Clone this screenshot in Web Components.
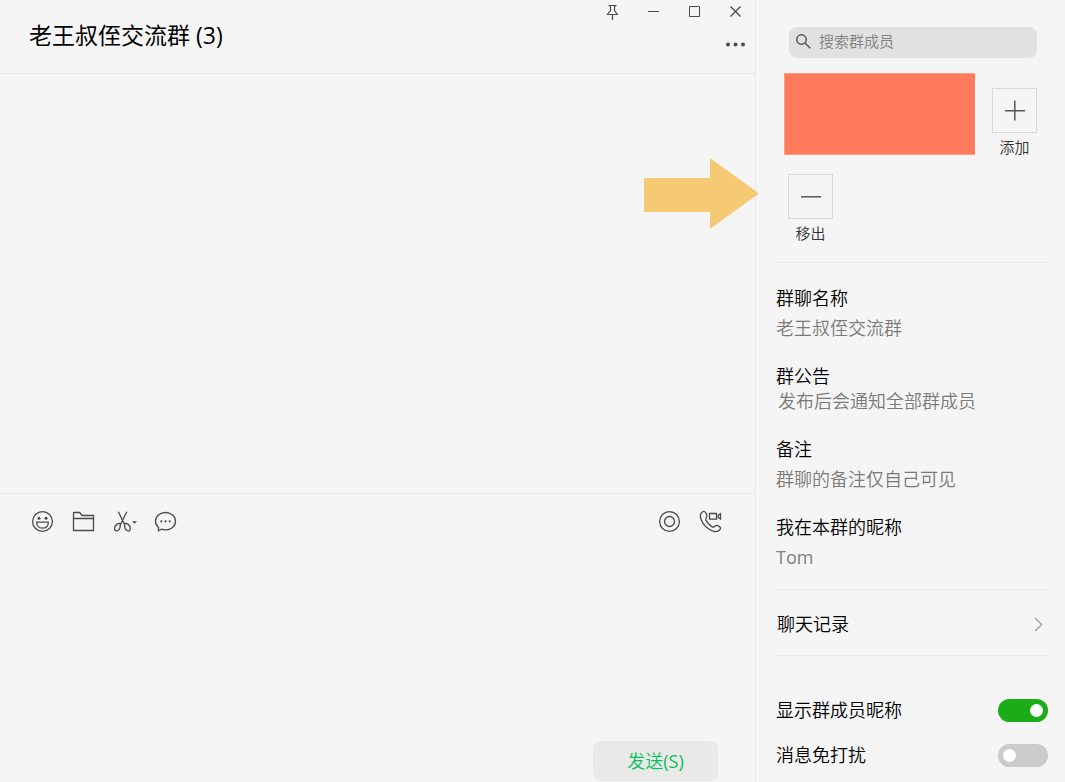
<!DOCTYPE html>
<html lang="zh-CN">
<head>
<meta charset="utf-8">
<meta name="viewport" content="width=device-width, initial-scale=1">
<title>老王叔侄交流群</title>
<style>
  html, body { margin: 0; height: 100%; }
  body {
    background: #f5f5f5;
    color: #000;
    font-family: "Open Sans", "Noto Sans CJK SC", sans-serif;
    font-size: 18px;
    font-weight: 350;
    line-height: 25px;
  }
</style>
</head>
<body>
<chat-app>
  <chat-window slot="chat" heading="老王叔侄交流群 (3)"></chat-window>
  <group-panel slot="panel">
    <search-box placeholder="搜索群成员"></search-box>
    <member-grid></member-grid>
    <info-list>
      <info-field label="群聊名称">老王叔侄交流群</info-field>
      <info-field label="群公告" notice>发布后会通知全部群成员</info-field>
      <info-field label="备注">群聊的备注仅自己可见</info-field>
      <info-field label="我在本群的昵称" latin>Tom</info-field>
    </info-list>
    <link-row>聊天记录</link-row>
    <toggle-list>
      <toggle-row checked>显示群成员昵称</toggle-row>
      <toggle-row>消息免打扰</toggle-row>
    </toggle-list>
  </group-panel>
</chat-app>

<script>
const reset = `
  :host, *, *::before, *::after { box-sizing: border-box; }
  button, input, textarea { font: inherit; color: inherit; margin: 0; padding: 0; border: 0; background: none; }
  svg { display: block; fill: none; stroke: #4a4a4a; }
`;
function define(name, render) {
  customElements.define(name, class extends HTMLElement {
    connectedCallback() {
      if (this.shadowRoot) return;
      this.attachShadow({ mode: "open" }).innerHTML = "<style>" + reset + "</style>" + render(this);
    }
  });
}

define("chat-app", () => `
  <style>
    :host { display: flex; min-height: 100vh; }
    ::slotted([slot=chat]) { flex: 1; min-width: 0; }
    ::slotted([slot=panel]) { flex: none; width: 310px; }
  </style>
  <slot name="chat"></slot><slot name="panel"></slot>`);

define("chat-window", el => `
  <style>
    :host { display: flex; flex-direction: column; }
    main { flex: 1; position: relative; }
    .arrow { position: absolute; z-index: 1; right: -4px; top: 84px; stroke: none; fill: #f6ca74; }
  </style>
  <chat-header>${el.getAttribute("heading")}</chat-header>
  <main>
    <svg class="arrow" width="115" height="71" viewBox="0 0 115 71" aria-hidden="true"><path d="M0 20H66V0L115 35.500L66 71V54H0Z"/></svg>
  </main>
  <chat-composer></chat-composer>`);

define("chat-header", () => `
  <style>
    :host { display: flex; justify-content: space-between; height: 74px; border-bottom: 1px solid #e7e7e7; }
    h1 { margin: 0; padding: 19px 0 0 29px; font-size: 23px; line-height: 32px; font-weight: 400; white-space: nowrap; }
    .side { display: flex; flex-direction: column; align-items: flex-end; }
    .bar { display: flex; }
    button { display: flex; justify-content: center; align-items: center; width: 41px; height: 23px; }
    .more { height: 42px; }
  </style>
  <h1><slot></slot></h1>
  <div class="side">
    <div class="bar">
      <button aria-label="置顶"><svg width="13" height="17" viewBox="0 0 13 17"><path stroke-width="1.200" d="M3.500 2.500H11.500M4.500 2.500L5.500 4V7.500L2.500 11.500H12.500L9.500 7.500V4L10.500 2.500M7.500 12V17"/></svg></button>
      <button aria-label="最小化"><svg width="13" height="13" viewBox="0 0 13 13"><path d="M2 6.500H13"/></svg></button>
      <button aria-label="最大化"><svg width="13" height="13" viewBox="0 0 13 13"><path d="M2.500 1.500H12.500V11.500H2.500Z"/></svg></button>
      <button aria-label="关闭"><svg width="13" height="13" viewBox="0 0 13 13"><path stroke-width="1.300" d="M2.500 1.500L12.500 11.500M12.500 1.500L2.500 11.500"/></svg></button>
    </div>
    <button class="more" aria-label="更多"><svg width="21" height="5" viewBox="0 0 21 5"><g fill="#4a4a4a" stroke="none"><circle cx="4" cy="2.500" r="2"/><circle cx="11.500" cy="2.500" r="2"/><circle cx="19" cy="2.500" r="2"/></g></svg></button>
  </div>`);

define("chat-composer", () => `
  <style>
    :host { display: flex; flex-direction: column; height: 289px; border-top: 1px solid #e7e7e7; }
    .tools { display: flex; justify-content: space-between; padding: 7px 24px 0 22px; }
    .set { display: flex; }
    .set button { display: flex; justify-content: center; align-items: center; width: 41px; height: 41px; }
    .set svg { stroke-width: 1.300; overflow: visible; }
    textarea { flex: 1; margin: 0 29px; resize: none; outline: none; }
    .foot { display: flex; justify-content: flex-end; padding: 0 37px 1px 0; }
    .send { width: 125px; height: 40px; border-radius: 8px; background: #e9e9e9; color: #07c160; }
    .key { font-weight: 400; }
  </style>
  <div class="tools">
    <div class="set">
      <button aria-label="表情"><svg width="25" height="25" viewBox="0 0 25 25"><circle cx="12.500" cy="12.500" r="9.900"/><path d="M6.700 13.200H18.300C18.300 17 16 19.200 12.500 19.200S6.700 17 6.700 13.200Z"/><g fill="#4a4a4a" stroke="none"><circle cx="9" cy="9.200" r="1.500"/><circle cx="16" cy="9.200" r="1.500"/></g></svg></button>
      <button aria-label="发送文件"><svg width="25" height="25" viewBox="0 0 25 25"><path d="M2.500 21.500V4Q2.500 3.500 3 3.500H8.700L11.200 6.500H22.500V21.500ZM2.500 9.500H22.500"/></svg></button>
      <button aria-label="截图"><svg width="25" height="25" viewBox="0 0 25 25"><path d="M6.400 2.700L13 16.500M14.800 2.700L8 16.500"/><path d="M8.300 14.500C6 13.800 3 16 2.600 19C2.200 21.700 4.300 22.600 6.200 21.300C8 20 8.500 17.300 8.300 14.500ZM12.600 14.500C15 13.800 18 16 18.300 19C18.600 21.700 16.600 22.600 14.700 21.300C12.900 20 12.400 17.300 12.600 14.500Z"/><path fill="#4a4a4a" stroke="none" d="M20 12.300H25L22.500 14.800Z"/></svg></button>
      <button aria-label="聊天记录"><svg width="25" height="25" viewBox="0 0 25 25"><path d="M5.500 18.400C3.500 16.700 2.500 14.600 2.500 12.200C2.500 7.300 7 3.500 12.500 3.500S22.500 7.300 22.500 12.200S18 20.900 12.500 20.900C11 20.900 9.800 20.700 8.600 20.200L5.400 21.800Z"/><g fill="#4a4a4a" stroke="none"><circle cx="8.300" cy="12.300" r="1.100"/><circle cx="12.500" cy="12.300" r="1.100"/><circle cx="16.700" cy="12.300" r="1.100"/></g></svg></button>
    </div>
    <div class="set">
      <button aria-label="直播"><svg width="25" height="25" viewBox="0 0 25 25"><circle cx="12.500" cy="12.500" r="9.900"/><circle cx="12.500" cy="12.500" r="5"/></svg></button>
      <button aria-label="音视频通话"><svg width="25" height="25" viewBox="0 0 25 25"><path d="M4.600 2.800C2.200 4.300 1.800 7.500 3.300 11C5 15.200 9 19.300 13.500 21.500C17 23.200 20 22.900 22 20.500C22.900 19.400 22.600 18.300 21.500 17.600L20 16.800C18.800 16.200 17.800 16.400 17 17.200C16 18.300 15 18.400 13.800 17.600C11.300 16 9.200 13.700 7.900 11.100C7.500 10.200 7.700 9.600 8.300 8.900C9.200 7.900 9.200 6.500 8.500 5.100L7.600 3.600C6.900 2.400 5.800 2.100 4.600 2.800Z"/><path d="M11.500 4.500H18.500V10.200H11.500ZM22.500 4.700V10L20.300 8.500V6.200Z"/></svg></button>
    </div>
  </div>
  <textarea aria-label="输入消息"></textarea>
  <div class="foot"><button class="send">发送<span class="key">(S)</span></button></div>`);

define("group-panel", () => `
  <style>
    :host { display: flex; flex-direction: column; border-left: 1px solid #e9e9e9; padding: 27px 17px 0 20px; }
  </style>
  <slot></slot>`);

define("search-box", el => `
  <style>
    :host { display: block; margin: 0 11px 0 13px; }
    label { display: flex; align-items: center; gap: 8px; height: 31px; padding: 0 8px 2px 7px; border-radius: 8px; background: #e1e1e1; }
    svg { flex: none; stroke: #555; stroke-width: 1.500; }
    input { flex: 1; min-width: 0; font-size: 15px; line-height: 25px; height: 25px; outline: none; }
    input::placeholder { color: #808080; opacity: 1; }
  </style>
  <label><svg width="15" height="15" viewBox="0 0 15 15"><circle cx="5.500" cy="5.500" r="4.700"/><path d="M9 9L14.300 14.300"/></svg><input type="text" aria-label="${el.getAttribute("placeholder")}" placeholder="${el.getAttribute("placeholder")}"></label>`);

define("member-grid", () => `
  <style>
    :host { display: block; padding: 15px 11px 16px 8px; border-bottom: 1px solid #e9e9e9; }
    .row { display: flex; justify-content: space-between; }
    .cover { width: 191px; height: 82px; background: #ff7b5c; border: 1px solid #ff9c84; border-right: 0; }
    .remove { padding: 14px 0 0 4px; }
    member-action { margin-top: 15px; }
    .remove member-action { margin-top: 0; }
  </style>
  <div class="row"><div class="cover"></div><member-action kind="add">添加</member-action></div>
  <div class="row remove"><member-action kind="remove">移出</member-action></div>`);

define("member-action", el => `
  <style>
    :host { display: block; width: 45px; }
    button { display: flex; flex-direction: column; align-items: center; width: 45px; font-size: 15px; line-height: 25px; color: #333; }
    .box { display: flex; align-items: center; justify-content: center; width: 45px; height: 45px; border: 1px solid #d9d9d9; margin-bottom: 2px; }
    svg { stroke: #555; stroke-width: 1.500; }
  </style>
  <button><span class="box"><svg width="21" height="21" viewBox="0 0 21 21"><path d="M1 10.800H21${el.getAttribute("kind") === "add" ? "M10.800 0.500V20.500" : ""}"/></svg></span><slot></slot></button>`);

define("info-list", () => `
  <style>
    :host { display: flex; flex-direction: column; gap: 23px; padding: 23px 0 19px; border-bottom: 1px solid #e9e9e9; }
  </style>
  <slot></slot>`);

define("info-field", el => `
  <style>
    :host { display: block; }
    dl, dd, dt { margin: 0; }
    dd { margin-top: 5px; color: #7a7a7a; }
    :host([notice]) dd { margin-top: 0; padding-left: 2px; }
    :host([latin]) dd { font-weight: 400; color: #808080; }
  </style>
  <dl><dt>${el.getAttribute("label")}</dt><dd><slot></slot></dd></dl>`);

define("link-row", () => `
  <style>
    :host { display: block; border-bottom: 1px solid #e9e9e9; }
    a { display: flex; align-items: center; justify-content: space-between; height: 65px; padding: 4px 5px 0 1px; color: inherit; text-decoration: none; }
    svg { stroke: #a6a6a6; stroke-width: 1.500; }
  </style>
  <a href="#history"><slot></slot><svg width="9" height="15" viewBox="0 0 9 15"><path d="M1 1L7.700 7.500L1 14"/></svg></a>`);

define("toggle-list", () => `
  <style>
    :host { display: flex; flex-direction: column; gap: 20px; padding: 42px 0 13px; }
  </style>
  <slot></slot>`);

define("toggle-row", el => `
  <style>
    :host { display: block; }
    label { display: flex; align-items: center; justify-content: space-between; height: 25px; }
    input { appearance: none; display: flex; align-items: center; width: 50px; height: 23px; padding: 0 5px; border-radius: 12px; background: #cbcbcb; }
    input::before { content: ""; width: 13px; height: 13px; border-radius: 50%; background: #fff; }
    input:checked { background: #1aad19; justify-content: flex-end; }
  </style>
  <label><slot></slot><input type="checkbox" role="switch"${el.hasAttribute("checked") ? " checked" : ""}></label>`);
</script>
</body>
</html>
